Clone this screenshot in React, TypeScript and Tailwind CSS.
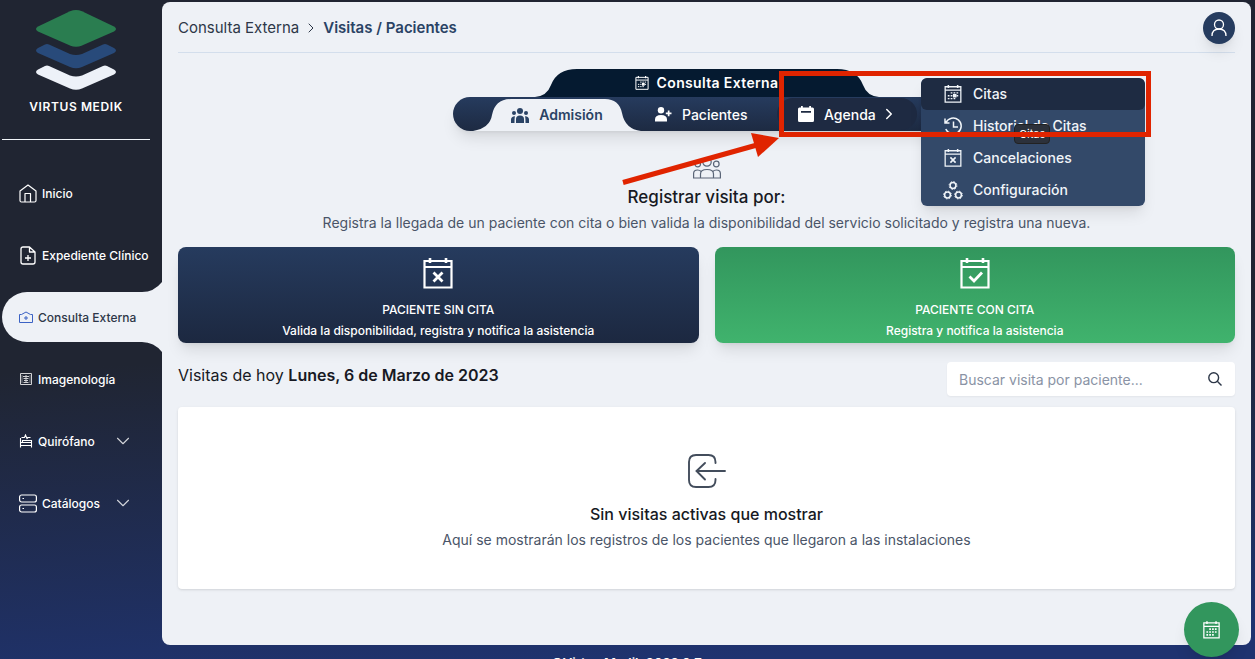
import type { ReactNode } from 'react';
import { clsx } from 'clsx';
import { ChevronDown, ChevronRight } from 'lucide-react';

interface IconProps {
  className?: string;
}

type CalendarMark = 'x' | 'check' | 'dots' | 'grid';

function Logo() {
  return (
    <svg viewBox="0 0 80 81" className="h-[81px] w-20" aria-hidden="true">
      <path d="M34 1.2Q40-1 46 1.2L78 16.500Q82 19 78 21.500L46 35.500Q40 38 34 35.500L2 21.500Q-2 19 2 16.500Z" fill="#2a7d50" />
      <path d="M2 38L9 34.500Q11 33.500 13 34.500L34 44Q40 46 46 44L67 34.500Q69 33.500 71 34.500L78 38Q82 40.500 78 43L46 57Q40 59.500 34 57L2 43Q-2 40.500 2 38Z" fill="#284a7a" />
      <path d="M2 59.500L9 56Q11 55 13 56L34 65.500Q40 67.500 46 65.500L67 56Q69 55 71 56L78 59.500Q82 62 78 64.500L46 78.500Q40 81 34 78.500L2 64.500Q-2 62 2 59.500Z" fill="#edf1f8" />
    </svg>
  );
}

function CalendarIcon({ mark, className }: { mark: CalendarMark } & IconProps) {
  return (
    <svg viewBox="0 0 30 31" fill="none" stroke="currentColor" strokeWidth="2.200" className={className} aria-hidden="true">
      <path d="M1.500 3h27v26.500h-27zM1.500 9h27" />
      <path d="M7 0v5M23 0v5" strokeWidth="2.600" />
      {mark === 'x' && <path d="M10.500 14.500l9 9M19.500 14.500l-9 9" strokeWidth="2.800" />}
      {mark === 'check' && <path d="M9.500 18.500l4.500 4.500 8-8.500" strokeWidth="2.800" />}
      {(mark === 'dots' || mark === 'grid') && (
        <path
          d={mark === 'grid' ? 'M11 14h14M6 19h19M6 24h14' : 'M11 13.500h14M6 18.500h19M6 23.500h14'}
          strokeWidth={mark === 'grid' ? 3 : 2.2}
          strokeDasharray="3 2"
        />
      )}
      {mark === 'dots' && <path d="M15 18.500h6" strokeWidth="6" />}
    </svg>
  );
}

function HomeIcon() {
  return (
    <svg viewBox="0 0 18 19" fill="none" stroke="currentColor" strokeWidth="1.200" strokeLinejoin="round" className="h-[19px] w-[18px]" aria-hidden="true">
      <path d="M1 7L9 1l8 6v9.500q0 1.500-1.500 1.500h-13Q1 18 1 16.500zM6 18V9.500h5.500V18" />
    </svg>
  );
}

function FileIcon() {
  return (
    <svg viewBox="0 0 18 19" fill="none" stroke="currentColor" strokeWidth="1.300" strokeLinejoin="round" className="h-[19px] w-[18px]" aria-hidden="true">
      <path d="M10.500 1H4Q2 1 2 3v13q0 2 2 2h10q2 0 2-2V6zV6H16M9 9v6M6 12h6" />
    </svg>
  );
}

function ClinicIcon() {
  return (
    <svg viewBox="0 0 14 13" fill="none" stroke="#3b62c4" className="h-[13px] w-3.5" aria-hidden="true">
      <path d="M.5 11.500V3.500h2L7 1l4.500 2.500h2v8zM7 5v4M5 7h4" />
    </svg>
  );
}

function XrayIcon() {
  return (
    <svg viewBox="0 0 14 12" fill="none" stroke="currentColor" className="h-3 w-3.5 opacity-80" aria-hidden="true">
      <path d="M1.500.5h11v11h-11zM7 2v7.500M4 3.500h6M4.500 5.500h5M5 7.500h4M4.500 9.500h5" />
      <path d="M3 2v8M11 2v8" opacity=".5" />
    </svg>
  );
}

function BedIcon() {
  return (
    <svg viewBox="0 0 14 14" fill="none" stroke="currentColor" strokeWidth="1.100" className="size-3.5" aria-hidden="true">
      <path d="M1.500 4v9.500M1.500 8.500h11v5M1.500 11.500h11M3.500 8.500v-2h9v2M2.500 3.500h3l1-2.500 1.500 3.500 1-1h2.500" />
    </svg>
  );
}

function DrawersIcon() {
  return (
    <svg viewBox="0 0 18 19" fill="none" stroke="currentColor" strokeWidth="1.200" className="h-[19px] w-[18px]" aria-hidden="true">
      <rect x=".6" y="1" width="16.800" height="7" rx="2" />
      <rect x=".6" y="11" width="16.800" height="7" rx="2" />
      <path d="M3.500 4.500h1.500M3.500 14.500h1.500" />
    </svg>
  );
}

function TeamIcon() {
  return (
    <svg viewBox="0 0 18 15" fill="currentColor" className="h-[15px] w-[18px]" aria-hidden="true">
      <circle cx="9" cy="3" r="3" />
      <circle cx="3" cy="5" r="2" />
      <circle cx="15" cy="5" r="2" />
      <path d="M5 15v-4q0-3.500 4-3.500t4 3.500v4zM0 15v-3.500q0-3 4-3.300Q3.500 9.500 3.500 15zM18 15v-3.500q0-3-4-3.300.5 1.300.5 6.800z" />
    </svg>
  );
}

function TeamOutlineIcon() {
  return (
    <svg viewBox="0 0 28 22" fill="none" stroke="#5a6577" strokeWidth="1.200" className="h-[22px] w-7" aria-hidden="true">
      <circle cx="14" cy="5" r="4.200" />
      <circle cx="4.700" cy="7" r="2.800" />
      <circle cx="23.300" cy="7" r="2.800" />
      <path d="M7.500 21v-4q0-4.500 6.500-4.500t6.500 4.500v4zM7.500 21H.6v-4.500q0-3.500 4-3.500 2.400 0 3.400 1.300M20.500 21h6.900v-4.500q0-3.500-4-3.500-2.400 0-3.400 1.300" />
    </svg>
  );
}

function UserPlusIcon() {
  return (
    <svg viewBox="0 0 17 15" fill="currentColor" className="h-[15px] w-[17px]" aria-hidden="true">
      <circle cx="6" cy="3.200" r="3.200" />
      <path d="M0 14.500v-2Q0 8 6 8t6 4.500v2zM12.800 3.500h1.700v2h2v1.700h-2v2h-1.700v-2h-2V5.500h2z" />
    </svg>
  );
}

function AgendaIcon() {
  return (
    <svg viewBox="0 0 16 16" fill="currentColor" className="size-4" aria-hidden="true">
      <path fillRule="evenodd" d="M3 0h1.800v1.500h6.400V0H13v1.500h1.500q1.500 0 1.500 1.500v11.500q0 1.500-1.500 1.500h-13Q0 16 0 14.500V3q0-1.500 1.500-1.500H3zM3 5v1.700h10V5z" />
    </svg>
  );
}

function HistoryIcon() {
  return (
    <svg viewBox="0 0 18 18" fill="none" stroke="currentColor" strokeWidth="1.500" className="size-[18px] shrink-0" aria-hidden="true">
      <path d="M2 5.500A8 8 0 1 1 1.800 12M1 1.500v4.500h4.500M9.500 4.500V10H14" />
    </svg>
  );
}

function GearsIcon() {
  const gears = [
    [10, 4.5],
    [4.5, 14],
    [15.5, 14],
  ];
  return (
    <svg viewBox="0 0 20 19" fill="none" stroke="currentColor" className="h-[19px] w-5" aria-hidden="true">
      {gears.map(([cx, cy]) => (
        <g key={`${cx}-${cy}`}>
          <circle cx={cx} cy={cy} r="2.900" strokeWidth="1.500" />
          <circle cx={cx} cy={cy} r="3.900" strokeWidth="1" strokeDasharray="1.500 1.563" />
        </g>
      ))}
    </svg>
  );
}

function PersonIcon() {
  return (
    <svg viewBox="0 0 16 18" fill="none" stroke="currentColor" strokeWidth="1.300" className="h-[18px] w-4" aria-hidden="true">
      <circle cx="8" cy="5.500" r="4.500" />
      <path d="M1 17q0-7 7-7t7 7" />
    </svg>
  );
}

function SearchIcon() {
  return (
    <svg viewBox="0 0 14 14" fill="none" stroke="#2d3748" strokeWidth="1.400" className="size-3.5" aria-hidden="true">
      <circle cx="5.700" cy="5.700" r="4.900" />
      <path d="M9.300 9.300l4.200 4.200" />
    </svg>
  );
}

function EnterIcon() {
  return (
    <svg viewBox="0 0 38 34" fill="none" stroke="#434d5c" strokeWidth="1.900" strokeLinecap="round" className="h-[34px] w-[38px]" aria-hidden="true">
      <path d="M27.500 9V8q0-7-7-7H8Q1 1 1 8v18q0 7 7 7h12.500q7 0 7-7v-1M37 17H9M17 9l-8.500 8 8.500 8.500" />
    </svg>
  );
}

interface SideItem {
  label: string;
  icon: ReactNode;
  active?: boolean;
  expandable?: boolean;
}

const sideItems: SideItem[] = [
  { label: 'Inicio', icon: <HomeIcon /> },
  { label: 'Expediente Clínico', icon: <FileIcon /> },
  { label: 'Consulta Externa', icon: <ClinicIcon />, active: true },
  { label: 'Imagenología', icon: <XrayIcon /> },
  { label: 'Quirófano', icon: <BedIcon />, expandable: true },
  { label: 'Catálogos', icon: <DrawersIcon />, expandable: true },
];

const agendaItems = [
  { label: 'Citas', icon: <CalendarIcon mark="dots" className="size-[18px]" />, active: true },
  { label: 'Historial de Citas', icon: <HistoryIcon /> },
  { label: 'Cancelaciones', icon: <CalendarIcon mark="x" className="size-[18px]" /> },
  { label: 'Configuración', icon: <GearsIcon /> },
];

function Sidebar() {
  return (
    <aside className="flex w-[162px] shrink-0 flex-col pl-0.5 pt-2.5 text-white">
      <div className="mr-3 flex flex-col items-center border-b border-slate-100 pb-[23px]">
        <Logo />
        <p className="mt-[7px] text-xs font-semibold leading-[18px] tracking-wider">VIRTUS MEDIK</p>
      </div>
      <nav className="mt-7 flex flex-col gap-3">
        {sideItems.map((item) => (
          <a
            key={item.label}
            href="#"
            className={clsx(
              'relative flex h-[50px] items-center gap-[5px] whitespace-nowrap pl-[17px] text-xs font-medium',
              item.active && 'rounded-l-full bg-[#eef1f6] text-[#2d3748]'
            )}
          >
            {item.active && (
              <svg viewBox="0 0 20 74" className="pointer-events-none absolute -top-3 right-0 h-[74px] w-5" fill="#eef1f6" aria-hidden="true">
                <path d="M20 2Q12 12 0 12h20zM20 72Q12 62 0 62h20z" />
              </svg>
            )}
            {item.icon}
            <span className="pt-0.5">{item.label}</span>
            {item.expandable && <ChevronDown className="ml-auto mr-7 size-[22px] opacity-80" strokeWidth={1.2} />}
          </a>
        ))}
      </nav>
    </aside>
  );
}

function AgendaMenu() {
  return (
    <div className="absolute -top-5 left-full z-10 ml-1 w-56 overflow-hidden rounded-md bg-[#2c4364]/97 shadow-lg">
      {agendaItems.map((item) => (
        <a
          key={item.label}
          href="#"
          className={clsx('flex h-8 items-center gap-2.5 pl-[22px] text-sm font-medium text-slate-100', item.active && 'rounded-md bg-[#1e2b42]')}
        >
          <span className="flex w-5 justify-center">{item.icon}</span>
          {item.label}
        </a>
      ))}
    </div>
  );
}

function SectionNav() {
  return (
    <div className="relative mx-auto mt-4 w-[507px] text-white">
      <div className="relative mx-auto flex h-7 w-[344px] items-center justify-center gap-2 text-sm font-semibold tracking-wide">
        <svg viewBox="0 0 344 28" preserveAspectRatio="none" className="absolute inset-0 size-full" fill="#051a30" aria-hidden="true">
          <path d="M0 28Q12 27 16 16Q22 0 42 0H302Q322 0 328 16Q332 27 344 28z" />
        </svg>
        <CalendarIcon mark="dots" className="relative size-3.5" />
        <span className="relative">Consulta Externa</span>
      </div>
      <nav className="flex h-[34px] items-center rounded-full bg-gradient-to-b from-[#263b5e] to-[#1d2a42] text-sm font-medium shadow-lg">
        <a href="#" className="relative ml-5 flex h-full w-[168px] shrink-0 items-center justify-center gap-2.5 pt-0.5 font-semibold text-[#2a4365]">
          <svg viewBox="0 0 168 34" preserveAspectRatio="none" className="absolute inset-0 size-full" fill="#eef1f6" aria-hidden="true">
            <path d="M0 34Q17 31 19 18Q22 2 38 2H132Q146 2 149 16Q152 32 168 34z" />
          </svg>
          <span className="relative"><TeamIcon /></span>
          <span className="relative">Admisión</span>
        </a>
        <a href="#" className="flex h-full w-[136px] shrink-0 items-center gap-2.5 pl-3.5">
          <UserPlusIcon />
          <span className="pt-0.5">Pacientes</span>
        </a>
        <div className="relative">
          <button type="button" className="flex h-8 w-[140px] items-center rounded-full bg-[#1e2a42] pl-[21px]">
            <AgendaIcon />
            <span className="ml-2.5 pt-0.5">Agenda</span>
            <ChevronRight className="ml-1 size-[18px]" />
          </button>
          <AgendaMenu />
        </div>
      </nav>
      <div className="absolute left-[561px] top-[55px] z-20 rounded-sm border border-[#222] bg-[#2c313b] px-1 text-[11px] leading-[18px]">
        Citas
      </div>
      <svg viewBox="0 0 700 120" fill="none" className="pointer-events-none absolute left-0 top-0 z-30 h-[120px] w-[700px] max-w-none" aria-hidden="true">
        <rect x="328.500" y="4.500" width="367" height="61" stroke="#e02400" strokeWidth="5" />
        <path d="M170 113.500L304 76" stroke="#e02400" strokeWidth="5" />
        <path d="M326 69L298 64L305 88z" fill="#e02400" />
      </svg>
    </div>
  );
}

interface VisitButtonProps {
  title: string;
  text: string;
  mark: CalendarMark;
  className: string;
}

function VisitButton({ title, text, mark, className }: VisitButtonProps) {
  return (
    <button
      type="button"
      className={clsx('flex h-24 flex-col items-center rounded-lg bg-gradient-to-b pt-[11px] text-xs font-medium text-white shadow-lg', className)}
    >
      <CalendarIcon mark={mark} className="h-[31px] w-[30px]" />
      <span className="mt-3 leading-[18px]">{title}</span>
      <span className="mt-0.5 leading-5">{text}</span>
    </button>
  );
}

export default function App() {
  return (
    <div className="flex h-screen overflow-hidden bg-[linear-gradient(176deg,#202532_50%,#1f3370_95%)] font-['Inter',sans-serif]">
      <Sidebar />
      <div className="flex min-w-0 flex-1 flex-col pr-1 pt-0.5">
        <main className="flex-1 rounded-lg bg-[#eef1f6] px-4 pt-2.5">
          <header className="flex items-center justify-between border-b border-[#d3deec] pb-2">
            <div className="flex items-center gap-1 text-[15px] text-[#2d3748]">
              <a href="#">Consulta Externa</a>
              <ChevronRight className="size-4" strokeWidth={1.5} />
              <a href="#" className="font-semibold text-[#2a4365]">Visitas / Pacientes</a>
            </div>
            <button type="button" aria-label="Perfil" className="flex size-8 items-center justify-center rounded-full bg-[#263c5f] text-white shadow-lg">
              <PersonIcon />
            </button>
          </header>

          <SectionNav />

          <section className="mt-[26px] flex flex-col items-center">
            <TeamOutlineIcon />
            <h1 className="mt-1.5 text-[17px] font-medium leading-6 text-[#171923]">Registrar visita por:</h1>
            <p className="mt-1 text-sm text-[#4a5568]">
              Registra la llegada de un paciente con cita o bien valida la disponibilidad del servicio solicitado y registra una nueva.
            </p>
          </section>

          <div className="mt-3.5 grid grid-cols-2 gap-4">
            <VisitButton title="PACIENTE SIN CITA" text="Valida la disponibilidad, registra y notifica la asistencia" mark="x" className="from-[#263b5e] to-[#1c2840]" />
            <VisitButton title="PACIENTE CON CITA" text="Registra y notifica la asistencia" mark="check" className="from-[#32965d] to-[#40b36d]" />
          </div>

          <div className="mt-[19px] flex items-start justify-between">
            <h2 className="pt-px text-base text-[#171923]">
              Visitas de hoy <strong className="font-semibold">Lunes, 6 de Marzo de 2023</strong>
            </h2>
            <label className="flex h-[34px] w-72 items-center rounded-sm bg-white pl-3 pr-[13px] shadow-xs">
              <input
                type="text"
                aria-label="Buscar visita"
                placeholder="Buscar visita por paciente..."
                className="min-w-0 flex-1 pt-0.5 text-sm outline-none placeholder:text-[#8a93a5]"
              />
              <SearchIcon />
            </label>
          </div>

          <section className="mt-[11px] flex flex-col items-center rounded-sm bg-white pb-[39px] pt-[47px] shadow">
            <EnterIcon />
            <h3 className="mt-3.5 text-base font-medium text-[#171923]">Sin visitas activas que mostrar</h3>
            <p className="mt-1 text-sm text-[#4a5568]">Aquí se mostrarán los registros de los pacientes que llegaron a las instalaciones</p>
          </section>
        </main>
        <footer className="h-3.5 shrink-0 overflow-hidden pr-40 pt-2 text-center text-[13px] font-semibold leading-5 text-white">©Virtus Medik 2023 0.7</footer>
      </div>
      <button type="button" aria-label="Nueva cita" className="fixed bottom-0.5 right-4 flex size-[55px] items-center justify-center rounded-full bg-[#32965d] text-white shadow-lg">
        <CalendarIcon mark="grid" className="h-[18px] w-[17px]" />
      </button>
    </div>
  );
}
